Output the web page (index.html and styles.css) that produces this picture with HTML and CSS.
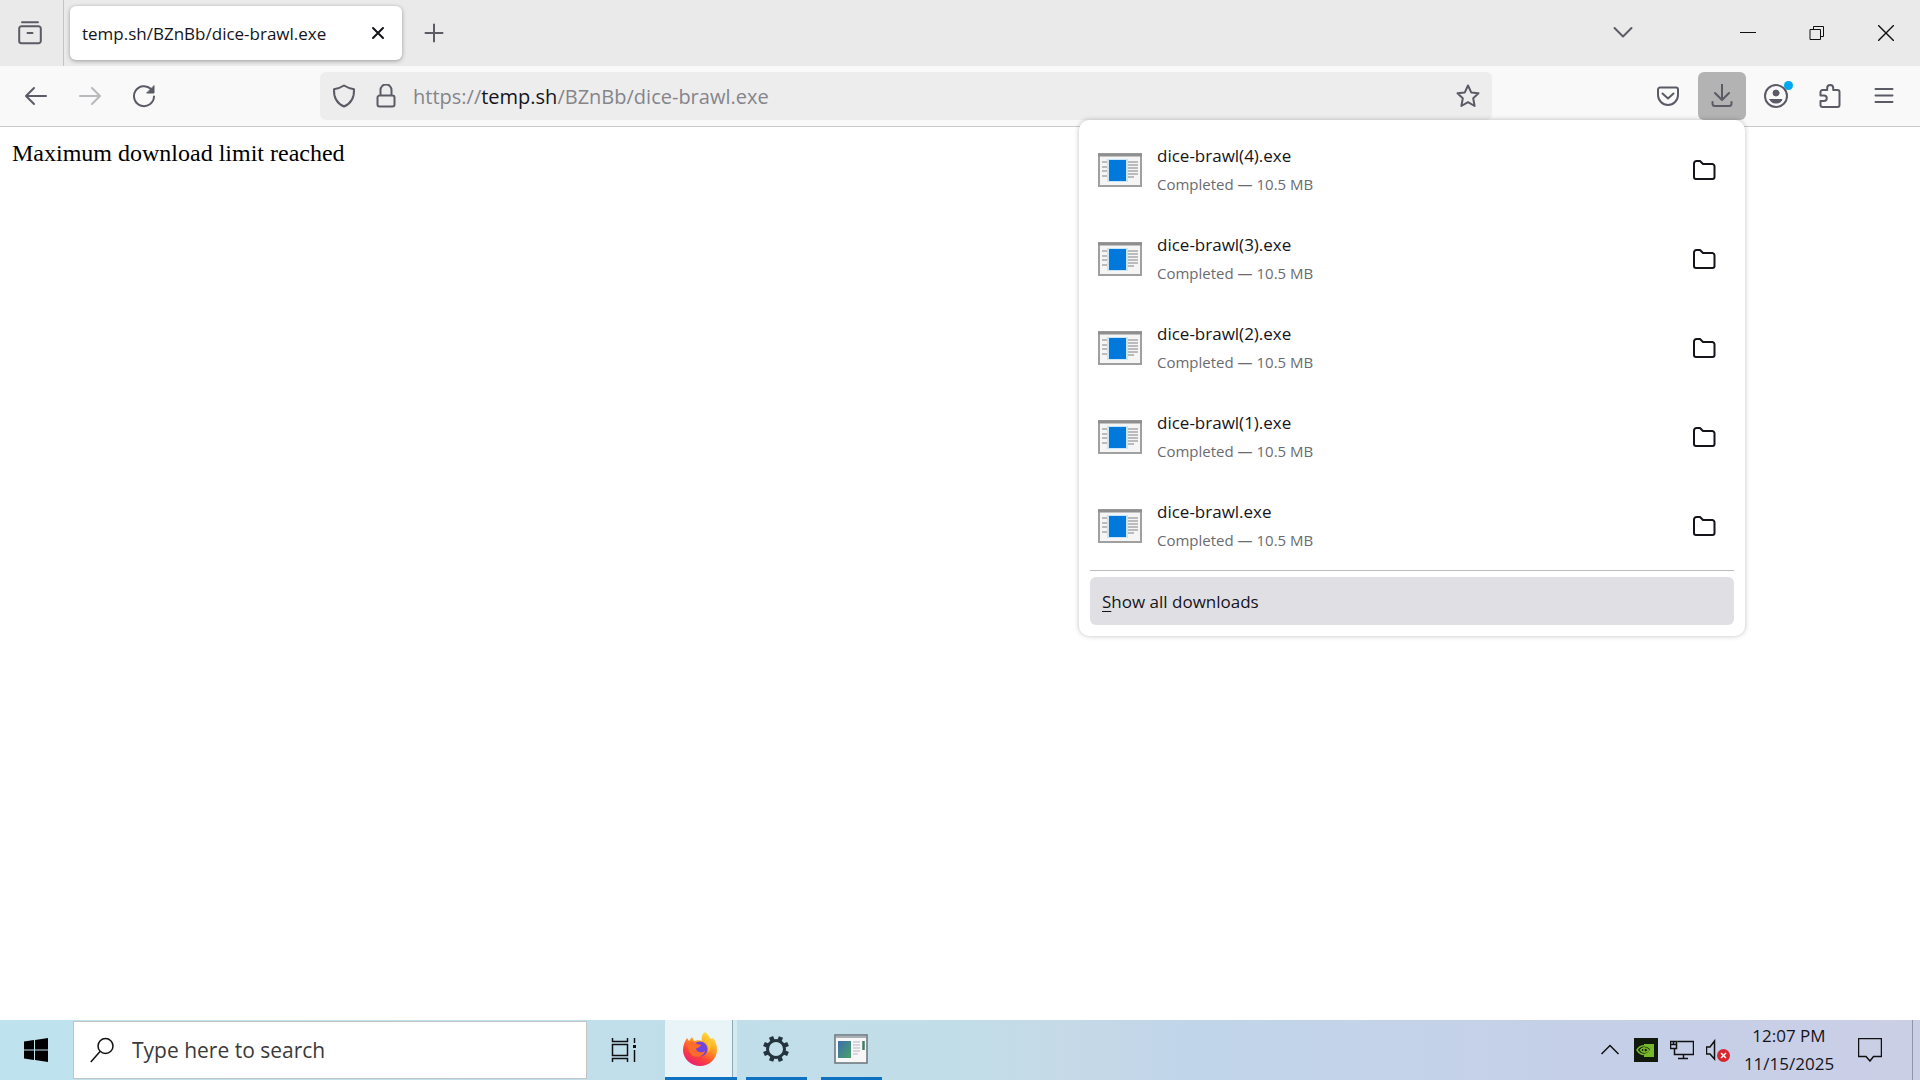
FILE: index.html
```html
<!DOCTYPE html>
<html lang="en">
<head>
  <meta charset="UTF-8">
  <title>temp.sh/BZnBb/dice-brawl.exe</title>
  <link rel="stylesheet" href="styles.css">
</head>
<body>
  <!-- shared icons -->
  <svg class="defs" width="0" height="0">
    <symbol id="exe" viewBox="0 0 44 34">
      <rect x="1" y="1" width="42" height="32" fill="#f5f5f5" stroke="#a0a0a0" stroke-width="2"/>
      <path d="M0 2h44" stroke="#8f8f8f" stroke-width="3"/>
      <path d="M4 9h5M4 14h5M4 18h5M4 23h5M30 9h10M30 12h10M30 15h10M30 18h10M30 21h10M30 24h6" stroke="#a8a8a8" stroke-width="1.3"/>
      <rect x="9" y="6" width="21" height="23" fill="#c5e6fb"/>
      <rect x="11" y="7" width="17" height="21" fill="#0078dc"/>
    </symbol>
    <symbol id="folder" viewBox="0 0 24 24">
      <path d="M2 19V5.500a2.500 2.500 0 0 1 2.500-2.500H8l3 3h9.500A2.500 2.500 0 0 1 22.500 8v11a2 2 0 0 1-2 2H4a2 2 0 0 1-2-2z" fill="none" stroke="#15141a" stroke-width="2"/>
    </symbol>
  </svg>

  <header class="tabs">
    <button class="icon view" aria-label="Firefox View">
      <svg width="24" height="24" viewBox="0 0 24 24"><path d="M4 1.200h16M3.500 5.200h17a2.300 2.300 0 0 1 2.300 2.300V20a2.300 2.300 0 0 1-2.300 2.300h-17A2.300 2.300 0 0 1 1.200 20V7.500a2.300 2.300 0 0 1 2.300-2.300zM9.500 12h5"/></svg>
    </button>
    <div class="tab">
      <span>temp.sh/BZnBb/dice-brawl.exe</span>
      <button class="icon close" aria-label="Close tab">
        <svg width="14" height="14" viewBox="0 0 14 14"><path d="M2 2l10 10M12 2L2 12"/></svg>
      </button>
    </div>
    <button class="icon new-tab" aria-label="New tab">
      <svg width="20" height="20" viewBox="0 0 20 20"><path d="M10 1.500v17M1.500 10h17"/></svg>
    </button>
    <button class="icon all-tabs" aria-label="List all tabs">
      <svg width="20" height="20" viewBox="0 0 20 20"><path d="M1.500 5l8.500 8.500L18.500 5"/></svg>
    </button>
    <div class="window-buttons">
      <button class="icon" aria-label="Minimize"><svg width="16" height="16" viewBox="0 0 16 16"><path d="M.5 7.500h15"/></svg></button>
      <button class="icon" aria-label="Restore"><svg width="16" height="16" viewBox="0 0 16 16"><path d="M1.500 4.500h10v10h-10zM4.500 4.500v-3h10v10h-3"/></svg></button>
      <button class="icon" aria-label="Close"><svg width="16" height="16" viewBox="0 0 16 16"><path d="M.5.500l15 15M15.500.500l-15 15" stroke-width="1.400"/></svg></button>
    </div>
  </header>

  <nav class="toolbar">
    <div class="history">
      <button class="icon" aria-label="Back"><svg width="24" height="24" viewBox="0 0 24 24"><path d="M22 12H2M10 4l-8 8 8 8"/></svg></button>
      <button class="icon" aria-label="Forward" disabled><svg width="24" height="24" viewBox="0 0 24 24"><path d="M2 12h20M14 4l8 8-8 8"/></svg></button>
      <button class="icon" aria-label="Reload"><svg width="24" height="24" viewBox="0 0 24 24"><path d="M22 12.500A10 10 0 1 1 19 5"/><path d="M22 2v7h-7z" class="solid"/></svg></button>
    </div>
    <div class="urlbar">
      <button class="icon" aria-label="Tracking protection"><svg width="24" height="24" viewBox="0 0 24 24"><path d="M12 1.500c3 2 6 3 10 3.700.4 7.800-2.500 14-10 17.300C4.500 19.200 1.600 13 2 5.200c4-.7 7-1.700 10-3.700z"/></svg></button>
      <button class="icon" aria-label="Site information"><svg width="24" height="24" viewBox="0 0 24 24"><path d="M5.500 11.500h13a2 2 0 0 1 2 2v7a2 2 0 0 1-2 2h-13a2 2 0 0 1-2-2v-7a2 2 0 0 1 2-2zM6.500 11.500V6a5.500 5.500 0 0 1 11 0v5.500"/></svg></button>
      <div class="url">https://<b>temp.sh</b>/BZnBb/dice-brawl.exe</div>
      <button class="icon" aria-label="Bookmark this page"><svg width="24" height="24" viewBox="0 0 24 24"><path d="M12 1.500l3.200 6.900 7.300.8-5.300 5 1.400 7.800-6.600-3.800L5.400 22l1.400-7.800-5.300-5 7.300-.8z"/></svg></button>
    </div>
    <div class="tools">
      <button class="icon" aria-label="Save to Pocket"><svg width="24" height="24" viewBox="0 0 24 24"><path d="M4 3.500h16a2 2 0 0 1 2 2V11a10 10 0 0 1-20 0V5.500a2 2 0 0 1 2-2zM6.500 9.500L12 14.500l5.500-5"/></svg></button>
      <button class="icon active" aria-label="Downloads"><svg width="24" height="24" viewBox="0 0 24 24"><path d="M12 0v15.500M5 9l7 7 7-7M2.500 18v1.500a2.500 2.500 0 0 0 2.500 2.500h14a2.500 2.500 0 0 0 2.500-2.500V18"/></svg></button>
      <button class="icon account" aria-label="Account"><svg width="24" height="24" viewBox="0 0 24 24"><circle cx="12" cy="12" r="11"/><circle cx="12" cy="9" r="3" class="solid"/><path d="M6 15.500h12c-1 3-3.500 3.500-6 3.500s-5-.5-6-3.500z" class="solid"/></svg><i></i></button>
      <button class="icon" aria-label="Extensions"><svg width="24" height="24" viewBox="0 0 24 24"><path d="M4.500 6h4.700V4a3 3 0 0 1 6 0v2h4.300a2 2 0 0 1 2 2v13a2 2 0 0 1-2 2h-15a2 2 0 0 1-2-2v-4h3.500a2.700 2.700 0 0 0 0-5.500H2.500V8a2 2 0 0 1 2-2z"/></svg></button>
      <button class="icon" aria-label="Menu"><svg width="20" height="20" viewBox="0 0 20 20"><path d="M1.500 3h17M1.500 9.500h17M1.500 16h17"/></svg></button>
    </div>
    <div class="downloads">
      <ul>
        <li><svg width="44" height="34"><use href="#exe"/></svg><div><p>dice-brawl(4).exe</p><small>Completed — 10.5 MB</small></div><button class="icon" aria-label="Show in folder"><svg width="24" height="24"><use href="#folder"/></svg></button></li>
        <li><svg width="44" height="34"><use href="#exe"/></svg><div><p>dice-brawl(3).exe</p><small>Completed — 10.5 MB</small></div><button class="icon" aria-label="Show in folder"><svg width="24" height="24"><use href="#folder"/></svg></button></li>
        <li><svg width="44" height="34"><use href="#exe"/></svg><div><p>dice-brawl(2).exe</p><small>Completed — 10.5 MB</small></div><button class="icon" aria-label="Show in folder"><svg width="24" height="24"><use href="#folder"/></svg></button></li>
        <li><svg width="44" height="34"><use href="#exe"/></svg><div><p>dice-brawl(1).exe</p><small>Completed — 10.5 MB</small></div><button class="icon" aria-label="Show in folder"><svg width="24" height="24"><use href="#folder"/></svg></button></li>
        <li><svg width="44" height="34"><use href="#exe"/></svg><div><p>dice-brawl.exe</p><small>Completed — 10.5 MB</small></div><button class="icon" aria-label="Show in folder"><svg width="24" height="24"><use href="#folder"/></svg></button></li>
      </ul>
      <button class="show-all"><u>S</u>how all downloads</button>
    </div>
  </nav>

  <main>Maximum download limit reached</main>

  <footer class="taskbar">
    <button class="start" aria-label="Start"><svg width="24" height="24" viewBox="0 0 24 24"><path d="M0 3.500l10-1.400v9.400H0zM11 2l13-2v11.500H11zM0 12.500h10v9.400l-10-1.400zM11 12.500h13V24l-13-2z"/></svg></button>
    <label class="search">
      <svg width="24" height="26" viewBox="0 0 24 26"><circle cx="15.500" cy="9" r="7.500"/><path d="M10 14.500L.8 25"/></svg>
      <input type="text" placeholder="Type here to search">
    </label>
    <button class="task-view" aria-label="Task View"><svg width="28" height="24" viewBox="0 0 28 24"><path d="M1.500 0v3.500h15V0M1.500 24v-3.500h15V24M1.500 6.500h15v11h-15zM23.500 0v5M23.500 12v12"/><path d="M22 7h3v3h-3z" fill="#111" stroke="none"/></svg></button>
    <button class="app current" aria-label="Firefox">
      <svg width="36" height="36" viewBox="0 0 36 36">
        <defs>
          <linearGradient id="fox" x1=".85" y1="0" x2=".25" y2="1"><stop offset="0" stop-color="#fff04a"/><stop offset=".4" stop-color="#ff9a1f"/><stop offset=".7" stop-color="#ff4338"/><stop offset="1" stop-color="#e3197d"/></linearGradient>
        </defs>
        <path d="M23 1c4 3 5 6 6 7l2-1c3 3 4 8 4 12a17 16 0 0 1-34 0C1 14 3 10 5 7l2 3 3-4 2 4c3-1 6-1 8 0-1-4 0-7 3-9z" fill="url(#fox)"/>
        <circle cx="18" cy="18" r="7.500" fill="#7044e0"/>
        <path d="M6 12c4-2 7-1 9 1l4 1c-1 3-4 2-5 4 1 4 6 4 9 2-1 5-7 7-12 5-4-3-6-8-5-13z" fill="#ff6b2b"/>
        <path d="M18 9c7 0 11 8 7 13 6-4 5-12-1-17l-1 5z" fill="#ffc52e"/>
      </svg>
    </button>
    <button class="app" aria-label="Settings">
      <svg width="28" height="28" viewBox="-14 -14 28 28" fill="none" stroke="#24343f">
        <circle r="8.500" stroke-width="3"/>
        <path d="M0-9v-4M0 9v4M-9 0h-4M9 0h4M6.400-6.400l2.800-2.800M-6.400-6.400l-2.800-2.800M6.400 6.400l2.800 2.800M-6.400 6.400l-2.800 2.800" stroke-width="4.500" transform="rotate(22.500)"/>
      </svg>
    </button>
    <button class="app" aria-label="Application">
      <svg width="34" height="30" viewBox="0 0 34 30">
        <defs><linearGradient id="pic" x1="0" y1="0" x2="1" y2="1"><stop offset="0" stop-color="#3c6fae"/><stop offset="1" stop-color="#4aa068"/></linearGradient></defs>
        <rect x="1" y="1" width="32" height="28" fill="#f7f7f7" stroke="#69737a" stroke-width="1.500"/>
        <path d="M2 3h30" stroke="#a9b0b5" stroke-width="2"/>
        <rect x="4" y="7" width="13" height="17" fill="url(#pic)"/>
        <path d="M19 8h7M19 11h7M19 14h7M19 17h7M19 20h5" stroke="#b9b3c2"/>
        <path d="M29.500 7v9" stroke="#3f7f63" stroke-width="2.500"/>
      </svg>
    </button>
    <div class="tray">
      <button aria-label="Show hidden icons"><svg width="20" height="24" viewBox="0 0 20 24"><path d="M1.500 16L10 7.500l8.500 8.500"/></svg></button>
      <button aria-label="NVIDIA Settings"><svg width="24" height="24" viewBox="0 0 24 24"><path d="M0 0h24v24H0z" fill="#10190c" stroke="none"/><path d="M10 6h10v13H10z" fill="#76b72a" stroke="none"/><path d="M3 12c3-5 9-6 14-1-4 7-10 7-14 1z" fill="#10190c" stroke="#76b72a"/><path d="M6.500 12c2-3 5-3 8 0-2 3-6 3-8 0zM10 9v6" stroke="#76b72a"/></svg></button>
      <button aria-label="Network"><svg width="24" height="24" viewBox="0 0 24 24"><path d="M7.500 3.500h16v13H4.500v-6M13.500 16.500v4M8 20.500h10M.5 3.500h6v7h-6zM3.500 3.500v3M1 6.500h5"/></svg></button>
      <button aria-label="Volume muted"><svg width="24" height="24" viewBox="0 0 24 24"><path d="M8.500 3v18L4 16H.500V9H4z"/><circle cx="17.500" cy="17.500" r="6.500" fill="#d8262e" stroke="none"/><path d="M15 15l5 5M20 15l-5 5" stroke="#fff"/></svg></button>
      <button class="clock"><time>12:07 PM</time><time>11/15/2025</time></button>
      <button class="notes" aria-label="Notifications"><svg width="24" height="24" viewBox="0 0 24 24"><path d="M.5.500h23v18h-8L12 23l-4-4.500H.500z"/></svg></button>
      <button class="desktop" aria-label="Show desktop"></button>
    </div>
  </footer>
</body>
</html>
```
FILE: styles.css
```css
* {
  box-sizing: border-box;
}
body {
  margin: 0;
  min-height: 100vh;
  display: flex;
  flex-direction: column;
  background: #fff;
  color: #15141a;
  font-family: "Open Sans", "Noto Sans", sans-serif;
  font-size: 17px;
}
button {
  border: 0;
  padding: 0;
  background: none;
  color: inherit;
  font: inherit;
}
.defs {
  position: absolute;
}
.icon {
  display: flex;
  align-items: center;
  justify-content: center;
  width: 48px;
  height: 48px;
  flex: none;
  border-radius: 6px;
}
.icon svg {
  fill: none;
  stroke: #5b5b66;
  stroke-width: 2;
  stroke-linecap: round;
  stroke-linejoin: round;
}
.icon .solid {
  fill: #5b5b66;
  stroke-width: 1;
}
.icon:disabled {
  opacity: 0.4;
}

/* tab strip */
.tabs {
  display: flex;
  align-items: center;
  height: 66px;
  background: #eaeaea;
}
.view {
  width: 64px;
  height: 66px;
  padding-right: 4px;
  border-right: 1px solid #c4c4c4;
  border-radius: 0;
}
.tab {
  display: flex;
  align-items: center;
  justify-content: space-between;
  width: 332px;
  height: 54px;
  margin-left: 6px;
  padding: 0 6px 0 12px;
  border-radius: 6px;
  background: #fff;
  box-shadow: 0 1px 4px rgba(0, 0, 0, 0.35);
}
.close {
  width: 36px;
  height: 36px;
}
.close svg {
  stroke: #15141a;
}
.new-tab {
  margin-left: 8px;
}
.all-tabs {
  margin-left: auto;
}
.window-buttons {
  display: flex;
  margin-left: 66px;
}
.window-buttons .icon {
  width: 69px;
  height: 66px;
}
.window-buttons svg {
  stroke: #111;
  stroke-width: 1;
  stroke-linecap: square;
  stroke-linejoin: miter;
}

/* toolbar */
.toolbar {
  position: relative;
  display: flex;
  align-items: center;
  height: 61px;
  padding: 0 12px;
  border-bottom: 1px solid #c9c9cb;
  background: #f9f9fa;
}
.history,
.tools {
  display: flex;
  gap: 6px;
}
.urlbar {
  display: flex;
  flex: 1;
  align-items: center;
  height: 48px;
  margin: 0 152px;
  padding: 0 3px;
  border-radius: 6px;
  background: #ededee;
}
.urlbar .icon {
  width: 42px;
}
.url {
  flex: 1;
  padding-left: 6px;
  color: #85858a;
  font-size: 20px;
}
.url b {
  color: #15141a;
  font-weight: normal;
}
.active {
  background: #b3b3b4;
}
.account {
  position: relative;
}
.account i {
  position: absolute;
  top: 9px;
  right: 7px;
  width: 9px;
  height: 9px;
  border-radius: 50%;
  background: #00a8f0;
}

/* downloads panel */
.downloads {
  position: absolute;
  top: 54px;
  right: 175px;
  width: 666px;
  padding: 5px 11px 11px;
  border-radius: 10px;
  background: #fff;
  box-shadow: 0 0 5px rgba(0, 0, 0, 0.25);
}
.downloads ul {
  margin: 0 0 6px;
  padding: 0;
  border-bottom: 1px solid #bdbdc2;
  list-style: none;
}
.downloads li {
  display: flex;
  align-items: center;
  height: 89px;
  padding: 0 6px 0 8px;
}
.downloads li div {
  flex: 1;
  padding-left: 15px;
}
.downloads p {
  margin: 0 0 4px;
  line-height: 24px;
}
.downloads small {
  display: block;
  color: #6b6b70;
  font-size: 15px;
  line-height: 24px;
}
.show-all {
  width: 100%;
  height: 48px;
  padding: 0 12px;
  border-radius: 6px;
  background: #e0e0e4;
  text-align: left;
}
.show-all u {
  text-underline-offset: 3px;
}

main {
  flex: 1;
  padding: 12px;
  color: #000;
  font: 24px/28px "Liberation Serif", serif;
}

/* taskbar */
.taskbar {
  display: flex;
  height: 60px;
  background: linear-gradient(90deg, #bfe2ef, #c1dde8 50%, #c6d9e7 56%, #c0d5ea 62%, #c4d3e9 72%, #c5cfe8 85%, #cbcfe6);
}
.taskbar button {
  display: flex;
  align-items: center;
  justify-content: center;
}
.start {
  width: 73px;
  padding-right: 2px;
}
.search {
  display: flex;
  align-items: center;
  width: 514px;
  margin: 1px 0;
  padding: 0 16px;
  border: 1px solid #c4c4c4;
  background: #fff;
}
.search svg,
.task-view svg,
.tray svg {
  flex: none;
  fill: none;
  stroke: #111;
  stroke-width: 1.5;
}
.search input {
  flex: 1;
  padding: 0 0 0 18px;
  border: 0;
  outline: 0;
  background: none;
  font: 21px "Open Sans", "Noto Sans", sans-serif;
}
.search input::placeholder {
  color: #3a3a3a;
}
.taskbar .task-view {
  width: 78px;
  padding-right: 2px;
}
.taskbar .app {
  width: 61px;
  margin-right: 14px;
  padding-right: 2px;
  border-bottom: 3px solid #0f72c0;
}
.taskbar .current {
  width: 72px;
  margin-right: 9px;
  background: linear-gradient(90deg, #e9f4f9 67px, #8fa9b4 67px 68px, #d6e9f1 68px);
}
.tray {
  display: flex;
  margin-left: auto;
}
.tray button {
  width: 36px;
}
.tray .clock {
  width: 106px;
  flex-direction: column;
  font-size: 17px;
  line-height: 28px;
}
.tray .notes {
  width: 70px;
  padding-right: 14px;
}
.tray .desktop {
  width: 8px;
  border-left: 1px solid #8c95ac;
}
```
